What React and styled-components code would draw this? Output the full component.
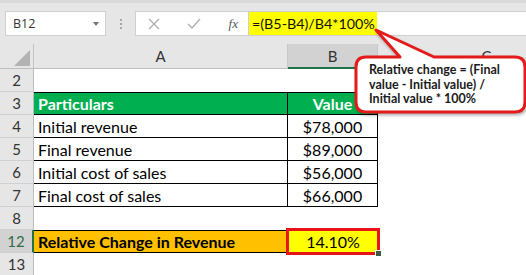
import React from 'react';
import styled, { createGlobalStyle } from 'styled-components';

const GlobalStyle = createGlobalStyle`
  html, body {
    margin: 0;
    padding: 0;
    background: #ffffff;
  }
  body {
    font-family: Lato, "Liberation Sans", sans-serif;
    overflow: hidden;
  }
`;

const COLS = '34px 254px 90px 218px';

const Page = styled.div`
  position: relative;
  width: 526px;
  height: 275px;
  overflow: hidden;
  background: #fff;
`;

const FormulaBar = styled.div`
  display: flex;
  align-items: center;
  height: 44px;
  padding: 0 0 0 5px;
  box-sizing: border-box;
  background: #e6e6e6;
  border-top: 3px solid #d9d9d9;
`;

const Field = styled.div`
  display: flex;
  align-items: center;
  box-sizing: border-box;
  height: 25px;
  background: #fff;
  border: 1px solid #d0d0d0;
`;

const NameBox = styled(Field)`
  width: 101px;
  padding: 0 6px 0 7px;
  justify-content: space-between;
  font-family: "Open Sans", "Liberation Sans", sans-serif;
  font-size: 12.5px;
  color: #333;
`;

const Caret = styled.span`
  width: 0;
  height: 0;
  border-left: 3.5px solid transparent;
  border-right: 3.5px solid transparent;
  border-top: 4px solid #777;
`;

const Grip = styled.div`
  display: flex;
  flex-direction: column;
  gap: 2px;
  margin: 0 13px 0 14px;
  span {
    width: 2px;
    height: 2px;
    background: #a8a8a8;
  }
`;

const FnBox = styled(Field)`
  width: 113px;
  padding: 0 10px 0 12px;
  justify-content: space-between;
  border-right: none;
`;

const Fx = styled.span`
  font-family: "Liberation Serif", serif;
  font-style: italic;
  font-size: 13px;
  color: #555;
`;

const FormulaField = styled(Field)`
  flex: 1;
  border-right: none;
  padding: 0;
`;

const FormulaText = styled.span`
  display: flex;
  align-items: center;
  height: 100%;
  padding: 0 2px 0 3px;
  background: #ffff00;
  font-family: Lato, sans-serif;
  font-size: 14.3px;
  color: #111;
`;

const Row = styled.div`
  display: grid;
  grid-template-columns: ${COLS};
  height: 23px;
`;

const HeaderRow = styled(Row)`
  height: 25px;
  background: #e6e6e6;
`;

const Corner = styled.div`
  position: relative;
  border-right: 1px solid #c4c4c4;
  border-bottom: 1px solid #bdbdbd;
  svg {
    position: absolute;
    left: 14px;
    top: 6px;
  }
`;

const ColHead = styled.div`
  display: flex;
  align-items: center;
  justify-content: center;
  box-sizing: border-box;
  font-size: 15px;
  color: #333;
  background: ${(p) => (p.$selected ? '#d2d2d2' : '#e6e6e6')};
  border-right: 1px solid #c8c8c8;
  border-bottom: ${(p) => (p.$selected ? '2px solid #217346' : '1px solid #bdbdbd')};
`;

const RowHead = styled.div`
  display: flex;
  align-items: center;
  justify-content: center;
  box-sizing: border-box;
  font-size: 15px;
  color: ${(p) => (p.$selected ? '#2f6b47' : '#333')};
  background: ${(p) => (p.$selected ? '#d2d2d2' : '#e6e6e6')};
  border-bottom: 1px solid #d0d0d0;
  border-right: ${(p) => (p.$selected ? '2px solid #217346' : '1px solid #bdbdbd')};
`;

const fills = {
  green: '#00b050',
  orange: '#ffc000',
  yellow: '#ffff00',
  none: '#ffffff',
};

const Cell = styled.div`
  position: relative;
  display: flex;
  align-items: center;
  justify-content: ${(p) => (p.$center ? 'center' : 'flex-start')};
  box-sizing: border-box;
  padding: 0 4px;
  font-size: 16px;
  white-space: nowrap;
  color: ${(p) => (p.$fill === 'green' ? '#fff' : '#000')};
  font-weight: ${(p) => (p.$bold ? 700 : 400)};
  background: ${(p) => fills[p.$fill || 'none']};
  border-right: ${(p) => (p.$boxed ? '1px solid #000' : 'none')};
  border-bottom: ${(p) => (p.$boxed ? '1px solid #000' : 'none')};
  border-top: ${(p) => (p.$top ? '1px solid #000' : 'none')};
`;

const ActiveCell = styled(Cell)`
  outline: 3px solid #e8141c;
  outline-offset: -1px;
  border: none;
  z-index: 1;
`;

const FillHandle = styled.span`
  position: absolute;
  right: -4px;
  bottom: -4px;
  width: 5px;
  height: 5px;
  background: #3d5a45;
  border: 1px solid #fff;
`;

const Callout = styled.div`
  position: absolute;
  left: 350px;
  top: 26px;
  width: 176px;
  height: 92px;
  z-index: 2;
  svg {
    position: absolute;
    inset: 0;
    filter: drop-shadow(1px 2px 1.5px rgba(0, 0, 0, 0.3));
  }
`;

const CalloutText = styled.div`
  position: absolute;
  left: 19px;
  top: 37px;
  font-family: Lato, sans-serif;
  font-weight: 700;
  font-size: 12.5px;
  line-height: 14.5px;
  color: #1a1a1a;
  white-space: nowrap;
`;

const rows = [
  { n: 2 },
  { n: 3, a: 'Particulars', b: 'Value', fill: 'green', bold: true, top: true },
  { n: 4, a: 'Initial revenue', b: '$78,000' },
  { n: 5, a: 'Final revenue', b: '$89,000' },
  { n: 6, a: 'Initial cost of sales', b: '$56,000' },
  { n: 7, a: 'Final cost of sales', b: '$66,000' },
  { n: 8 },
];

const App = () => (
  <Page>
    <GlobalStyle />
    <FormulaBar>
      <NameBox>
        B12
        <Caret />
      </NameBox>
      <Grip>
        <span />
        <span />
        <span />
      </Grip>
      <FnBox>
        <svg width="12" height="12" viewBox="0 0 12 12">
          <path d="M1 1 L11 11 M11 1 L1 11" stroke="#b0b0b0" strokeWidth="1.4" fill="none" />
        </svg>
        <svg width="14" height="12" viewBox="0 0 14 12">
          <path d="M1 6 L5 10 L13 1" stroke="#b0b0b0" strokeWidth="1.4" fill="none" />
        </svg>
        <Fx>fx</Fx>
      </FnBox>
      <FormulaField>
        <FormulaText>=(B5-B4)/B4*100%</FormulaText>
      </FormulaField>
    </FormulaBar>

    <HeaderRow>
      <Corner>
        <svg width="16" height="16" viewBox="0 0 16 16">
          <polygon points="0,16 16,16 16,0" fill="#b3b3b3" />
        </svg>
      </Corner>
      <ColHead>A</ColHead>
      <ColHead $selected>B</ColHead>
      <ColHead>C</ColHead>
    </HeaderRow>

    {rows.map((r) => {
      const boxed = Boolean(r.a);
      return (
        <Row key={r.n}>
          <RowHead>{r.n}</RowHead>
          <Cell $boxed={boxed} $top={r.top} $fill={r.fill} $bold={r.bold}>{r.a}</Cell>
          <Cell $boxed={boxed} $top={r.top} $fill={r.fill} $bold={r.bold} $center>{r.b}</Cell>
          <Cell />
        </Row>
      );
    })}

    <Row>
      <RowHead $selected>12</RowHead>
      <Cell $boxed $top $fill="orange" $bold>Relative Change in Revenue</Cell>
      <ActiveCell $fill="yellow" $center>
        14.10%
        <FillHandle />
      </ActiveCell>
      <Cell />
    </Row>
    <Row>
      <RowHead>13</RowHead>
      <Cell />
      <Cell />
      <Cell />
    </Row>

    <Callout>
      <svg width="176" height="92" viewBox="0 0 176 92">
        <path
          d="M16 31 L50 31 L26 4 L84 31 L165 31 Q175 31 175 41 L175 76 Q175 86 165 86 L16 86 Q6 86 6 76 L6 41 Q6 31 16 31 Z"
          fill="#fff"
          stroke="#e41b1b"
          strokeWidth="3"
          strokeLinejoin="round"
        />
      </svg>
      <CalloutText>
        Relative change = (Final
        <br />
        value - Initial value) /
        <br />
        Initial value * 100%
      </CalloutText>
    </Callout>
  </Page>
);

export default App;
